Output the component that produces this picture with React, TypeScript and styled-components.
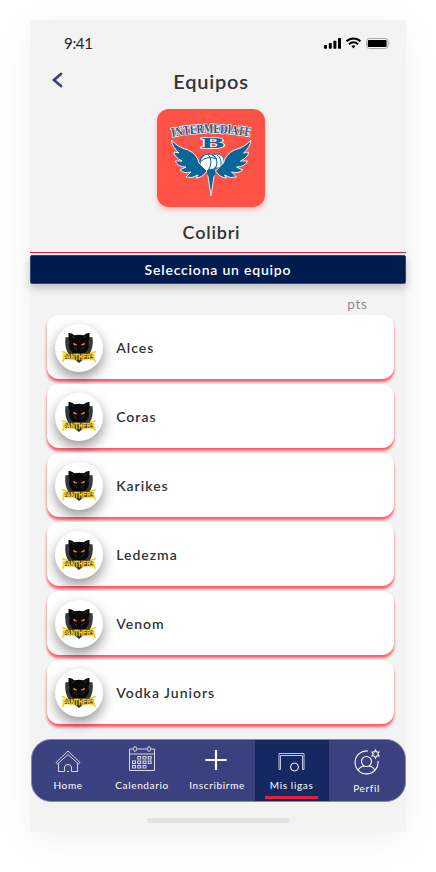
import React from "react";
import styled, { createGlobalStyle } from "styled-components";

const Global = createGlobalStyle`
  * { box-sizing: border-box; }
  body { margin: 0; background: #fff; font-family: Lato, sans-serif; color: #333; }
`;

const Stage = styled.main`
  width: 436px;
  height: 872px;
  padding: 20px 0 0 30.4px;
  overflow: hidden;
`;

const Phone = styled.div`
  width: 375.2px;
  height: 812px;
  display: flex;
  flex-direction: column;
  background: #f3f3f3;
  box-shadow: 0 8px 36px rgba(0, 0, 0, 0.06);
`;

const StatusBar = styled.div`
  height: 46px;
  flex: none;
  display: flex;
  align-items: center;
  justify-content: space-between;
  padding: 0 14.5px 0 33.6px;
  font-size: 15px;
  letter-spacing: -0.3px;
  color: #222;
`;

const Header = styled.header`
  height: 43px;
  flex: none;
  display: grid;
  grid-template-columns: 54px 1fr 68px;
  align-items: start;
`;

const Back = styled.button`
  border: 0;
  background: none;
  padding: 5px 0 0 20px;
  display: flex;
`;

const Title = styled.h1`
  margin: 3px 0 0;
  font-size: 20px;
  line-height: 24px;
  letter-spacing: 0.75px;
  font-weight: 600;
  text-align: center;
`;

const Badge = styled.div`
  width: 108px;
  height: 98px;
  flex: none;
  margin: 0 auto 0 126.2px;
  border-radius: 12px;
  background: #ff5247;
  box-shadow: 0 3px 5px rgba(255, 82, 71, 0.35);
`;

const League = styled.h2`
  height: 45px;
  flex: none;
  margin: 0;
  padding: 14px 13px 0 0;
  font-size: 18px;
  font-weight: 600;
  line-height: 22px;
  letter-spacing: 0.8px;
  text-align: center;
`;

const Rule = styled.div`
  height: 1px;
  flex: none;
  background: #e91e3f;
  margin-bottom: 2px;
`;

const Banner = styled.div`
  height: 29px;
  flex: none;
  background: #001b50;
  color: #fff;
  border-radius: 2px;
  border: 1px solid #33486f;
  font-size: 14px;
  font-weight: 600;
  letter-spacing: 0.8px;
  line-height: 28px;
  text-align: center;
  box-shadow: 0 4px 10px rgba(0, 0, 0, 0.22);
`;

const Points = styled.div`
  height: 31px;
  flex: none;
  padding: 12px 38px 0 0;
  font-size: 13.5px;
  line-height: 17px;
  letter-spacing: 0.7px;
  text-align: right;
  color: #8c8c8c;
`;

const List = styled.ul`
  list-style: none;
  margin: 0;
  padding: 0 0 0 16.2px;
  display: flex;
  flex-direction: column;
  gap: 5px;
`;

const Card = styled.li`
  width: 347px;
  height: 64px;
  display: flex;
  align-items: center;
  gap: 13.6px;
  padding: 0 0 0 8px;
  background: #fff;
  border-radius: 12px;
  box-shadow: 0 3px 3px rgba(255, 33, 55, 0.75);
  font-size: 14px;
  font-weight: 600;
  letter-spacing: 1px;
`;

const Crest = styled.span`
  width: 48px;
  height: 48px;
  margin-top: 1px;
  border-radius: 50%;
  background: #fff;
  box-shadow: 0 6px 13px rgba(0, 0, 0, 0.42);
  display: flex;
  align-items: center;
  justify-content: center;
  svg { flex: none; overflow: visible; }
`;

const Nav = styled.nav`
  height: 63px;
  width: 375px;
  flex: none;
  margin: 15px 0 0 0.2px;
  border-radius: 20px;
  border: 1px solid #8388b1;
  background: #3b407e;
  display: grid;
  grid-template-columns: 73px 75px 75px 74px 1fr;
  overflow: hidden;
`;

const Tab = styled.a<{ $active?: boolean; $low?: number }>`
  display: flex;
  flex-direction: column;
  align-items: center;
  padding-top: ${(p) => 6 + (p.$low ?? 0)}px;
  background: ${(p) => (p.$active ? "#152861" : "transparent")};
  color: #fff;
  font-size: 10px;
  line-height: 14px;
  letter-spacing: 0.65px;
  svg { flex: none; margin-bottom: 6px; }
`;

const Marker = styled.i`
  width: 53px;
  height: 3px;
  flex: none;
  background: #e91e3f;
  margin-top: 4px;
`;

const HomeBar = styled.div`
  width: 143px;
  height: 5px;
  border-radius: 3px;
  background: #e4e4e4;
  margin: 16px 0 0 117px;
`;

const StatusIcons = () => (
  <svg width="68" height="14" viewBox="0 0 68 14">
    <g fill="#000">
      <rect x="1" y="9" width="3" height="3.8" rx=".7" />
      <rect x="5.8" y="7" width="3" height="5.8" rx=".7" />
      <rect x="10.4" y="4.7" width="3" height="8.1" rx=".7" />
      <rect x="15" y="2" width="3" height="10.8" rx=".7" />
      <path d="M28.4 10a3.4 3.4 0 0 1 4 0l-2 2.5z" />
    </g>
    <path d="M23.5 5.3a10 10 0 0 1 14 0M26 8.2a6.4 6.4 0 0 1 9 0" fill="none" stroke="#000" strokeWidth="2" />
    <rect x="43.5" y="2.5" width="21.5" height="10" rx="2.8" fill="#f3f3f3" stroke="#aaa" />
    <rect x="44.8" y="4" width="18.8" height="7" rx="1" />
    <path d="M66 5.5q1.8 1.7 0 3.5z" fill="#aaa" />
  </svg>
);

const ColibriLogo = () => (
  <svg width="108" height="98" viewBox="0 0 108 98">
    <defs>
      <path id="arch" d="M15 28Q54 20 94 28" />
      <path id="wing" d="M14.500 31Q20 38 31 41Q40 45 42 54L50 62Q45 69 39 69L41 66Q35 70 29 68L34 63Q27 65 23 61L29 58Q21 58 18 52L25 52Q17 48 17 43L22 44Q15 38 14.500 31Z" />
    </defs>
    <circle cx="60" cy="52" r="7" fill="#fff" stroke="#07669a" strokeWidth=".8" />
    <path d="M60 46Q65 49 64 57" fill="none" stroke="#07669a" />
    <circle cx="51.500" cy="53.500" r="8.500" fill="#fff" stroke="#07669a" strokeWidth="1.1" />
    <path d="M43 53Q50 46 60 50M51 45Q57 52 51 62" fill="none" stroke="#07669a" />
    <g fill="#07669a" stroke="#fff" strokeWidth=".9" strokeLinejoin="round">
      <use href="#wing" />
      <use href="#wing" transform="translate(108.500) scale(-1 1)" />
      <path d="M50.500 64L54 87L57.500 64Z" />
    </g>
    <circle cx="54.200" cy="64" r="4.2" fill="#07669a" />
    <g fill="#07669a" stroke="#fff" strokeWidth="1.4" paintOrder="stroke" fontFamily="DejaVu Serif" fontWeight="700">
      <text fontSize="11.800"><textPath href="#arch" textLength="78.500" lengthAdjust="spacingAndGlyphs">INTERMEDIATE</textPath></text>
      <text x="43.500" y="39" fontSize="13" textLength="24.500" lengthAdjust="spacingAndGlyphs">B</text>
    </g>
  </svg>
);

const PantherLogo = () => (
  <svg width="38" height="34" viewBox="-1 0 38 34">
    <path d="M4.500 6Q8 7 11 4L18 5L25 4Q28 7 31.500 6Q33 16 28 24L18 32L8 24Q3 16 4.500 6Z" fill="#38393b" />
    <path d="M7.500 2Q11 1.500 13.500 4.500Q18 3 22.500 4.500Q25 1.500 28.500 2Q29 7 27.500 11Q29 17 25 21L22 25H14L11 21Q7 17 8.500 11Q7 7 7.500 2Z" fill="#090a0b" />
    <path d="M10.500 4.500L13 7M25.500 4.500L23 7M13 16L16 19M23 16L20 19" stroke="#454648" strokeWidth=".7" fill="none" />
    <path d="M12.500 12L16 14L13 14ZM23.500 12L20 14L23 14Z" fill="#ff861b" stroke="#ff861b" strokeWidth=".5" />
    <path d="M3 28L4 23L10 22H26L32 23L33 28L26 28L21 28.500L18 31L15 28.500L10 28Z" fill="#302d1c" />
    <text transform="translate(1.800 28.500) scale(.66 1)" fontFamily="Liberation Sans" fontWeight="700" fontSize="9" letterSpacing="0" fill="#efd221" stroke="#efd221" strokeWidth=".4">PANTHERS</text>
    <path d="M1 20.500L7 22.500M35 20.500L29 22.500M3.500 27L1.500 31M32.500 27L34.500 31" stroke="#efd221" strokeWidth="1.600" />
  </svg>
);

const HomeIcon = () => (
  <svg width="26" height="26" viewBox="0 0 26 26" fill="none" stroke="#d8d9e8" strokeWidth="1">
    <path d="M1 16.500L13 5L25 16.500L23.500 18L13 8.500L2.500 18ZM3.500 17.500V26M22.500 17.500V26M3.500 25.500H9.500V21Q10 18.500 13 18.500T16.500 21V25.500H22.500M12 25.500H14" />
  </svg>
);

const CalendarIcon = () => (
  <svg width="28" height="26" viewBox="0 0 28 26" fill="none" stroke="#d8d9e8" strokeWidth="1">
    <path d="M5 3H1.500V24.500H26.500V3H23M9 3H19M1.500 8H26.500" />
    <rect x="5.500" y=".7" width="3" height="4.500" rx="1.500" /><rect x="19.500" y=".7" width="3" height="4.500" rx="1.500" />
    {[10.500, 15, 19.500].map((y, r) => [4.500, 9.700, 15, 20.200].map((x, c) =>
      (r === 0 && c === 0) || (r === 2 && c === 3) ? null : <rect key={`${x}-${y}`} x={x} y={y} width="3" height="2.500" />
    ))}
  </svg>
);

const PlusIcon = () => (
  <svg width="28" height="26" viewBox="0 0 28 26"><path d="M13 4V24M2.500 14H23.500" stroke="#fff" strokeWidth="2.2" /></svg>
);

const GoalIcon = () => (
  <svg width="28" height="26" viewBox="0 0 28 26" fill="none" stroke="#c4c9dd" strokeWidth="1">
    <path d="M1 23.500V7.500H26V23.500H24.500V9.500H2.500V23.500Z" /><circle cx="16.500" cy="21" r="4" fill="#152861" stroke="#fff" />
  </svg>
);

const ProfileIcon = () => (
  <svg width="28" height="26" viewBox="0 0 28 26" fill="none" stroke="#fff" strokeWidth="1.1">
    <path d="M15 2A11.500 11.500 0 1 0 25 12" /><circle cx="13.500" cy="12.500" r="5" /><path d="M5 21.500Q7 17.500 11 17M16 17Q20 17.500 22 21.500" />
    <path d="M22.500 1L23.500 3L26 3L24.800 5L26 7L23.500 7L22.500 9L21.300 7L19 7L20.200 5L19 3L21.500 3Z" />
  </svg>
);

const teams = ["Alces", "Coras", "Karikes", "Ledezma", "Venom", "Vodka Juniors"];

export default function App() {
  return (
    <Stage>
      <Global />
      <Phone>
        <StatusBar><span>9:41</span><StatusIcons /></StatusBar>
        <Header>
          <Back aria-label="Volver">
            <svg width="13" height="18" viewBox="0 0 13 18"><path d="M11 3L4 9L11 15" fill="none" stroke="#3b407e" strokeWidth="2.8" strokeLinecap="round" /></svg>
          </Back>
          <Title>Equipos</Title>
        </Header>
        <Badge><ColibriLogo /></Badge>
        <League>Colibri</League>
        <Rule />
        <Banner>Selecciona un equipo</Banner>
        <Points>pts</Points>
        <List>
          {teams.map((team) => <Card key={team}><Crest><PantherLogo /></Crest>{team}</Card>)}
        </List>
        <Nav>
          <Tab><HomeIcon />Home</Tab>
          <Tab><CalendarIcon />Calendario</Tab>
          <Tab><PlusIcon />Inscribirme</Tab>
          <Tab $active><GoalIcon />Mis ligas<Marker /></Tab>
          <Tab $low={3}><ProfileIcon />Perfil</Tab>
        </Nav>
        <HomeBar />
      </Phone>
    </Stage>
  );
}
